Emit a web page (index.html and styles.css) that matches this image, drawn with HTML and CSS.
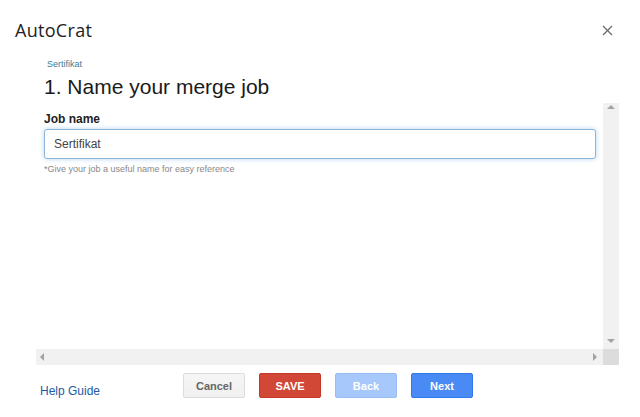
FILE: index.html
```html
<!DOCTYPE html>
<html>
<head>
<meta charset="utf-8">
<link rel="stylesheet" href="styles.css">
</head>
<body>
<div class="dialog">
  <header class="titlebar">
    <h1 class="title">AutoCrat</h1>
    <button class="close" aria-label="Close">
      <svg width="11" height="11" viewBox="0 0 11 11"><path d="M1 1L10 10M10 1L1 10" stroke="#6b6b6b" stroke-width="1.3" fill="none"/></svg>
    </button>
  </header>
  <div class="stephead">
    <div class="crumb">Sertifikat</div>
    <h2 class="steptitle">1. Name your merge job</h2>
  </div>
  <div class="frame">
    <div class="content">
      <label class="label" for="job">Job name</label>
      <input id="job" class="input" type="text" value="Sertifikat">
      <p class="hint">*Give your job a useful name for easy reference</p>
    </div>
    <div class="vbar">
      <span class="arr up"></span>
      <span class="arr down"></span>
    </div>
    <div class="hbar">
      <span class="arr left"></span>
      <span class="arr right"></span>
    </div>
    <div class="corner"></div>
  </div>
  <footer class="footer">
    <a class="help" href="#">Help Guide</a>
    <div class="buttons">
      <button class="btn cancel">Cancel</button>
      <button class="btn save">SAVE</button>
      <button class="btn back">Back</button>
      <button class="btn next">Next</button>
    </div>
  </footer>
</div>
</body>
</html>
```
FILE: styles.css
```css
* { box-sizing: border-box; }
html, body { margin: 0; padding: 0; background: #fff; }
body { width: 640px; height: 417px; overflow: hidden; font-family: "Liberation Sans", Arial, sans-serif; }
.dialog { display: flex; flex-direction: column; }
.titlebar { display: flex; align-items: center; justify-content: space-between; padding: 18px 27px 0 15px; height: 42px; }
.title { margin: 0; font-family: "Open Sans", Roboto, sans-serif; font-weight: 400; font-size: 18px; letter-spacing: 0.3px; line-height: 24px; color: #222; }
.close { border: 0; background: none; padding: 0; width: 11px; height: 11px; display: flex; }
.stephead { padding: 17px 0 0 44px; height: 61px; }
.crumb { font-size: 9px; line-height: 11px; color: #3d7c95; padding-left: 3px; }
.steptitle { margin: 5px 0 0; font-weight: 400; font-size: 21px; line-height: 24px; color: #1a1a1a; }
.frame { margin-left: 36px; width: 583px; height: 262px; display: grid; grid-template-columns: 1fr 16px; grid-template-rows: 1fr 16px; }
.content { padding: 9px 7px 0 8px; display: flex; flex-direction: column; }
.label { font-size: 12px; font-weight: bold; color: #222; line-height: 14px; }
.input { margin-top: 3px; height: 30px; width: 100%; border: 1px solid #8fb5d6; border-radius: 3px; box-shadow: 0 0 5px rgba(120, 180, 230, 0.55); font: 12px "Liberation Sans", Arial, sans-serif; color: #444; padding: 0 9px; outline: none; }
.hint { margin: 5px 0 0; font-size: 9px; color: #888; line-height: 11px; }
.vbar { background: #f1f1f1; position: relative; }
.hbar { background: #f1f1f1; position: relative; }
.corner { background: #dcdcdc; }
.arr { position: absolute; width: 0; height: 0; border: 4px solid transparent; }
.up { left: 4px; top: 2px; border-bottom-color: #a3a3a3; border-top-width: 0; }
.down { left: 4px; bottom: 6px; border-top-color: #a3a3a3; border-bottom-width: 0; }
.left { left: 4px; top: 4px; border-right-color: #a3a3a3; border-left-width: 0; }
.right { right: 6px; top: 4px; border-left-color: #a3a3a3; border-right-width: 0; }
.footer { display: flex; align-items: center; padding: 8px 0 0 40px; }
.help { width: 143px; font-size: 12px; color: #1f5aa6; text-decoration: none; padding-top: 10px; }
.buttons { display: flex; gap: 14px; }
.btn { width: 62px; height: 25px; border-radius: 2px; font: bold 11px "Liberation Sans", Arial, sans-serif; padding: 0; }
.cancel { background: linear-gradient(#f6f6f6, #f0f0f0); border: 1px solid #dcdcdc; color: #666; }
.save { background: #d14836; border: 1px solid #c53727; color: #fff; }
.back { background: #a6c8fa; border: 1px solid #98bdf4; color: #fff; }
.next { background: #4a8af4; border: 1px solid #3079ed; color: #fff; }
```
